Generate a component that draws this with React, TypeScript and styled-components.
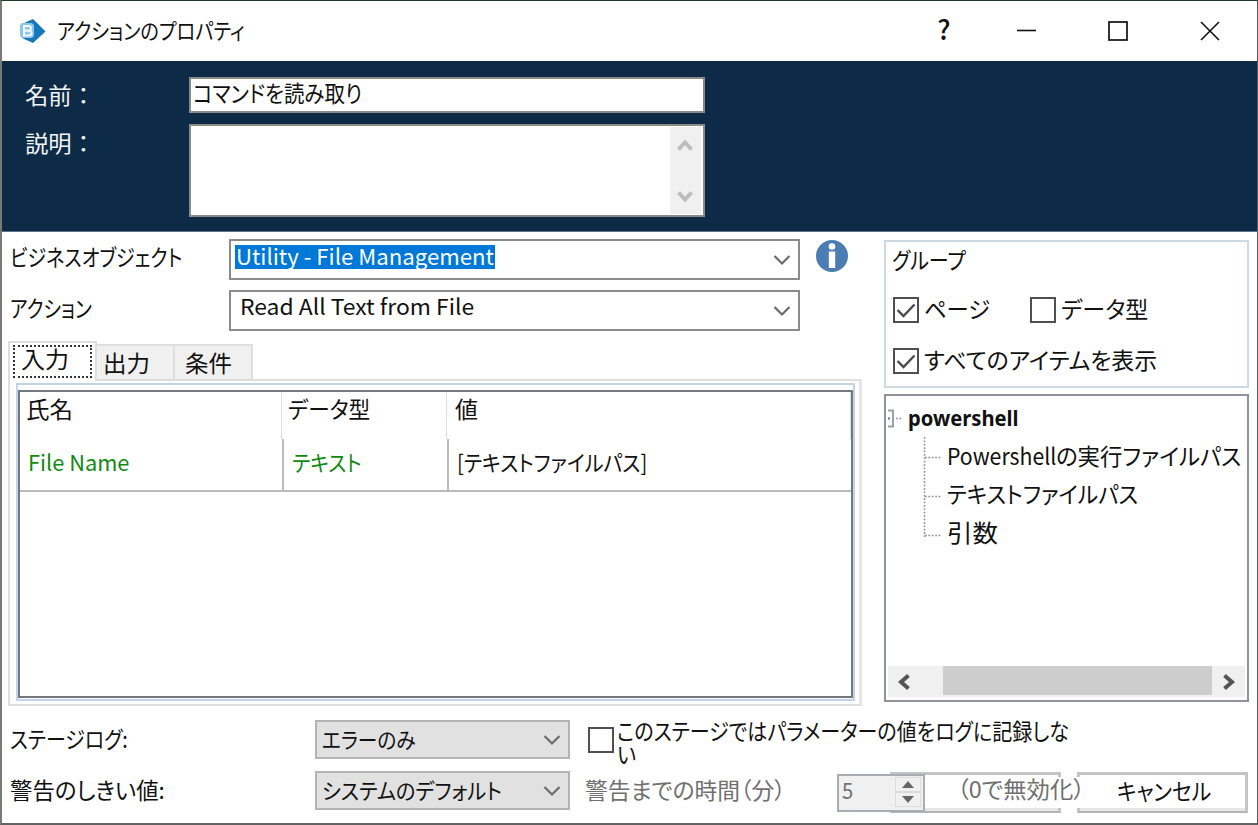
import React, { useLayoutEffect, useRef, useState } from 'react';
import styled, { createGlobalStyle, css } from 'styled-components';

const GlobalStyle = createGlobalStyle`
  * { box-sizing: border-box; }
  body {
    margin: 0;
    overflow: hidden;
    background: #fff;
    color: #111;
    font-family: 'Noto Sans CJK JP', 'Noto Sans', sans-serif;
    font-feature-settings: 'palt';
  }
  svg { display: block; flex: none; }
`;

/* Text condensed or widened to an exact width */
const FitBox = styled.span<{ $w: number; $size: number; $line: number; $color?: string }>`
  display: block;
  flex: none;
  width: ${(p) => p.$w}px;
  height: ${(p) => p.$line}px;
  line-height: ${(p) => p.$line}px;
  font-size: ${(p) => p.$size}px;
  color: ${(p) => p.$color ?? 'inherit'};
  white-space: nowrap;
`;
const FitInner = styled.span`
  display: inline-block;
  vertical-align: top;
  transform-origin: 0 50%;
`;

type FitProps = { w: number; size?: number; line?: number; color?: string; children: React.ReactNode };

function Fit({ w, size = 22, line = 30, color, children }: FitProps) {
  const ref = useRef<HTMLSpanElement>(null);
  const [scale, setScale] = useState(1);
  useLayoutEffect(() => {
    if (ref.current) setScale(w / ref.current.offsetWidth);
  }, [w]);
  return (
    <FitBox $w={w} $size={size} $line={line} $color={color}>
      <FitInner ref={ref} style={{ transform: `translateY(-2px) scaleX(${scale})` }}>{children}</FitInner>
    </FitBox>
  );
}

const Window = styled.div`
  width: 1258px;
  height: 825px;
  border-style: solid;
  border-width: 1px 1px 2px 2px;
  border-color: #1c3a2b #57585a #626262 #7b7876;
  background: #fff;
  overflow: hidden;
`;

const TitleBar = styled.header`
  display: flex;
  align-items: center;
  height: 60px;
  padding-left: 18px;
`;
const TitleText = styled.div`
  margin-left: 11px;
  flex: 1;
`;
const WindowButtons = styled.div`
  display: flex;
  align-items: center;
  height: 60px;
`;
const WindowButton = styled.div<{ $w: number }>`
  display: flex;
  align-items: center;
  justify-content: center;
  width: ${(p) => p.$w}px;
  height: 60px;
`;
const HelpMark = styled.span`
  font: 500 27px/30px 'Noto Sans CJK JP', sans-serif;
  padding-bottom: 4px;
`;

const Banner = styled.section`
  display: grid;
  grid-template-columns: 164px 516px;
  grid-template-rows: 36px 93px;
  row-gap: 11px;
  height: 171px;
  padding: 16px 0 0 23px;
  background: #0d2a47;
  border-bottom: 1px solid #5f7388;
  color: #f2f4f6;
`;
const BannerLabel = styled.div<{ $top: number }>`
  padding-top: ${(p) => p.$top}px;
  font-feature-settings: normal;
`;
const TextField = styled.div`
  display: flex;
  padding-left: 2px;
  border: 2px solid #8a8a88;
  background: #fff;
  color: #111;
`;
const MultiField = styled(TextField)`
  justify-content: flex-end;
  padding: 1px 2px 1px 0;
`;
const VerticalScroll = styled.div`
  display: flex;
  flex-direction: column;
  justify-content: space-between;
  align-items: center;
  width: 31px;
  padding: 11px 2px 10px 0;
  background: #f0f0f0;
`;

const Main = styled.main`
  display: flex;
  height: 478px;
`;
const Left = styled.div`
  width: 882px;
  padding: 7px 0 0 6px;
`;
const FieldRow = styled.div`
  display: flex;
  height: 40px;
  margin-bottom: 11px;
`;
const FieldLabel = styled.div`
  width: 221px;
  padding: 4px 0 0 2px;
`;
const Combo = styled.div<{ $w: number; $h: number; $muted?: boolean }>`
  display: flex;
  flex: none;
  justify-content: space-between;
  width: ${(p) => p.$w}px;
  height: ${(p) => p.$h}px;
  border: 2px solid ${(p) => (p.$muted ? '#b4b4b4' : '#8b8b8b')};
  background: ${(p) => (p.$muted ? '#e1e1e1' : '#fff')};
  padding: 0 7px 0 4px;
  svg { align-self: center; }
`;
const Selection = styled.div`
  height: 24px;
  margin-top: 4px;
  padding: 0 1px;
  background: #0078d7;
  color: #fff;
`;
const PlainValue = styled.div<{ $left: number; $top?: number }>`
  padding: ${(p) => p.$top ?? 0}px 0 0 ${(p) => p.$left}px;
`;
const InfoIcon = styled.div`
  margin: 1px 0 0 16px;
`;

const Tabs = styled.div`
  display: flex;
  align-items: flex-end;
  height: 40px;
  margin-bottom: -2px;
  position: relative;
`;
const Tab = styled.div<{ $active?: boolean; $w: number; $pad?: number }>`
  width: ${(p) => p.$w}px;
  height: 37px;
  padding: 3px 0 0 ${(p) => p.$pad ?? 8}px;
  border: 2px solid #dedede;
  border-left-width: 0;
  border-bottom-color: #dcdcdc;
  background: #f0f0f0;
  ${(p) =>
    p.$active &&
    css`
      height: 40px;
      padding: 2px 3px 0;
      border-left-width: 2px;
      border-bottom: 0;
      background: #fff;
    `}
`;
const FocusRect = styled.div`
  display: flex;
  height: 33px;
  padding-left: 6px;
  border: 2px dotted #333;
`;
const TabPanel = styled.div`
  width: 854px;
  height: 327px;
  padding: 2px 4px 4px 6px;
  border: 2px solid #dfdfdf;
  border-right: 3px solid #e6e6e6;
`;
const GridFrame = styled.div`
  height: 318px;
  width: 839px;
  padding-top: 5px;
  border: 2px solid #c2d4ea;
`;
const DataGrid = styled.div`
  height: 308px;
  border: 2px solid #74777b;
`;
const GridHead = styled.div`
  display: grid;
  grid-template-columns: 262px 165px 1fr;
  height: 47px;
`;
const HeadCell = styled.div`
  padding: 3px 0 0 6px;
  border-right: 1px solid #dedede;
  &:last-child { padding-left: 8px; }
`;
const GridRow = styled.div`
  display: grid;
  grid-template-columns: 264px 165px 1fr;
  height: 53px;
  border-bottom: 2px solid #bababa;
`;
const RowCell = styled.div`
  padding: 9px 0 0 8px;
  border-right: 2px solid #bdbdbd;
  &:last-child { border-right: 0; }
`;

const Right = styled.aside`
  width: 365px;
  padding-top: 8px;
`;
const GroupBox = styled.div`
  height: 148px;
  padding: 4px 0 0 6px;
  border: 2px solid #ccdae6;
`;
const CheckRow = styled.div<{ $top: number }>`
  display: flex;
  align-items: center;
  height: 30px;
  margin: ${(p) => p.$top}px 0 0 1px;
`;
const CheckItem = styled.div<{ $w: number }>`
  display: flex;
  align-items: center;
  gap: 5px;
  width: ${(p) => p.$w}px;
`;
const CheckBox = styled.div`
  display: flex;
  align-items: center;
  justify-content: center;
  flex: none;
  width: 26px;
  height: 26px;
  border: 2px solid #505050;
  background: #fff;
`;

const TreeBox = styled.div`
  display: flex;
  flex-direction: column;
  justify-content: space-between;
  height: 308px;
  margin-top: 6px;
  padding: 3px 2px;
  border: 2px solid #8d929b;
`;
const TreeBody = styled.div`
  display: flex;
  height: 200px;
`;
const TreeLabels = styled.div`
  margin-left: -35px;
`;
const TreeItem = styled.div<{ $root?: boolean }>`
  display: flex;
  height: 38.5px;
  align-items: center;
  padding-top: ${(p) => (p.$root ? 2 : 0)}px;
  margin-left: ${(p) => (p.$root ? 0 : 39)}px;
  font-weight: ${(p) => (p.$root ? 700 : 400)};
  font-family: ${(p) => (p.$root ? "'Noto Sans', sans-serif" : 'inherit')};
`;
const HorizontalScroll = styled.div`
  display: flex;
  align-items: center;
  justify-content: space-between;
  height: 31px;
  padding: 0 9px;
  background: #f0f0f0;
`;
const Thumb = styled.div`
  width: 269px;
  height: 29px;
  margin: 0 10px 2px 31px;
  background: #cdcdcd;
`;

const Footer = styled.footer`
  padding: 10px 0 0 8px;
`;
const FooterRow = styled.div`
  display: flex;
  height: 51px;
`;
const FooterLabel = styled.div`
  width: 305px;
  padding-top: 5px;
`;
const LogOption = styled.div`
  display: flex;
  margin-left: 18px;
  gap: 3px;
  ${CheckBox} { margin-top: 7px; }
`;
const LogText = styled.div`
  margin-top: 1px;
`;
const WarnLabel = styled.div`
  width: 267px;
  padding: 5px 0 0 15px;
`;
const Actions = styled.div`
  position: relative;
  display: flex;
  gap: 16px;
  width: 412px;
  height: 42px;
  padding: 1px 0 0 53px;
`;
const DialogButton = styled.div`
  display: flex;
  width: 171px;
  height: 41px;
  padding: 2px 0 0 37px;
  border: 3px solid #c4c4c4;
  border-bottom: 2px solid #b4b4b4;
  box-shadow: inset 0 -3px 0 #e6e6e6;
`;
const Spinner = styled.div`
  position: absolute;
  left: 0;
  top: 3px;
  display: flex;
  justify-content: space-between;
  width: 88px;
  height: 38px;
  padding: 0 0 0 3px;
  border: 2px solid #a9acb4;
  background: #f0f0f0;
`;
const SpinnerArrows = styled.div`
  display: flex;
  flex-direction: column;
  width: 28px;
  padding: 1px 2px 3px 0;
`;
const SpinnerArrow = styled.div`
  display: flex;
  flex: 1;
  align-items: center;
  justify-content: center;
  border: 1px solid #dcdcdc;
`;
const DisableHint = styled.div`
  position: absolute;
  left: 119px;
  top: 6px;
  display: flex;
  width: 137px;
  height: 31px;
  padding-left: 1px;
  background: #fff;
`;

const ChevronDown = ({ color = '#6b6b6b' }) => (
  <svg width="18" height="12" viewBox="0 0 18 12" fill="none" stroke={color} strokeWidth="2.2">
    <path d="M1.5 2 9 9.5 16.5 2" />
  </svg>
);
const ScrollChevron = ({ up = false }) => (
  <svg width="16" height="14" viewBox="0 0 16 14" fill="none" stroke="#bdbdbd" strokeWidth="4">
    <path d={up ? 'M1.5 11.5 8 4.5 14.5 11.5' : 'M1.5 2.5 8 9.5 14.5 2.5'} />
  </svg>
);
const SideChevron = ({ right = false }) => (
  <svg width="14" height="16" viewBox="0 0 14 16" fill="none" stroke="#555" strokeWidth="4">
    <path d={right ? 'M2.5 1.5 10 8 2.5 14.5' : 'M11.5 1.5 4 8 11.5 14.5'} />
  </svg>
);
const CheckMark = () => (
  <svg width="22" height="22" viewBox="0 0 22 22" fill="none" stroke="#4a4a4a" strokeWidth="2.4">
    <path d="M2.5 11 8.5 17 19.5 5.5" />
  </svg>
);
const AppLogo = () => (
  <svg width="26" height="25" viewBox="0 0 26 25">
    <path d="M13 0 25.500 12.500 13 24 2 19V5Z" fill="#1478bd" />
    <path d="M0 6 2 4H12L14 6V17L12 19H2L0 17Z" fill="#8cc6e8" />
    <path d="M4 7H8.500Q11 7 11 9.200 11 11 9.500 11.600 11.500 12.300 11.500 14 11.500 16.500 8.500 16.500H4Z" fill="none" stroke="#f4fafe" strokeWidth="2" />
    <path d="M5 11.700H9.500" stroke="#f4fafe" strokeWidth="2" />
  </svg>
);
const TreeLines = () => (
  <svg width="55" height="200" viewBox="0 0 55 200" fill="none">
    <path d="M0 11.500H5V27.500H0" stroke="#a0a0a0" strokeWidth="2" />
    <path d="M0 19.500H2" stroke="#4a6cc0" strokeWidth="2" />
    <path d="M8 19.500H14M37 58.500H53M37 97.500H53M37 136.500H53M36.500 38V138" stroke="#8c8c8c" strokeWidth="1.500" strokeDasharray="1.700 1.700" />
  </svg>
);

export default function App() {
  const green = '#128a12';
  const gray = '#707070';
  return (
    <>
      <GlobalStyle />
      <Window>
        <TitleBar>
          <AppLogo />
          <TitleText><Fit w={188}>アクションのプロパティ</Fit></TitleText>
          <WindowButtons>
            <WindowButton $w={76}><HelpMark>?</HelpMark></WindowButton>
            <WindowButton $w={90}>
              <svg width="20" height="20"><path d="M0 9.500H19" stroke="#111" strokeWidth="1.600" /></svg>
            </WindowButton>
            <WindowButton $w={91}>
              <svg width="20" height="20"><rect x="1" y="1" width="18" height="18" fill="none" stroke="#111" strokeWidth="1.700" /></svg>
            </WindowButton>
            <WindowButton $w={94}>
              <svg width="20" height="20"><path d="M1 1 19 19M19 1 1 19" stroke="#111" strokeWidth="1.600" /></svg>
            </WindowButton>
          </WindowButtons>
        </TitleBar>

        <Banner>
          <BannerLabel $top={4}><Fit w={70} size={23}>名前：</Fit></BannerLabel>
          <TextField><Fit w={169} size={23}>コマンドを読み取り</Fit></TextField>
          <BannerLabel $top={5}><Fit w={70} size={23}>説明：</Fit></BannerLabel>
          <MultiField>
            <VerticalScroll><ScrollChevron up /><ScrollChevron /></VerticalScroll>
          </MultiField>
        </Banner>

        <Main>
          <Left>
            <FieldRow>
              <FieldLabel><Fit w={172} size={23}>ビジネスオブジェクト</Fit></FieldLabel>
              <Combo $w={571} $h={41}>
                <Selection><Fit w={258} line={24}>Utility - File Management</Fit></Selection>
                <ChevronDown />
              </Combo>
              <InfoIcon>
                <svg width="32" height="32" viewBox="0 0 32 32">
                  <circle cx="16" cy="16" r="16" fill="#4a7db4" />
                  <circle cx="16" cy="6.500" r="3.300" fill="#fff" />
                  <path d="M12.800 11.500H19.200V28H12.800Z" fill="#fff" />
                </svg>
              </InfoIcon>
            </FieldRow>
            <FieldRow>
              <FieldLabel><Fit w={82} size={23}>アクション</Fit></FieldLabel>
              <Combo $w={571} $h={41}>
                <PlainValue $left={5}><Fit w={234}>Read All Text from File</Fit></PlainValue>
                <ChevronDown />
              </Combo>
            </FieldRow>
            <Tabs>
              <Tab $active $w={89}><FocusRect><Fit w={48} size={23} line={27}>入力</Fit></FocusRect></Tab>
              <Tab $w={78} $pad={6}><Fit w={47} size={23}>出力</Fit></Tab>
              <Tab $w={78} $pad={10}><Fit w={47} size={23}>条件</Fit></Tab>
            </Tabs>
            <TabPanel>
              <GridFrame>
                <DataGrid>
                  <GridHead>
                    <HeadCell><Fit w={47} size={23}>氏名</Fit></HeadCell>
                    <HeadCell><Fit w={82} size={23}>データ型</Fit></HeadCell>
                    <HeadCell><Fit w={23} size={23}>値</Fit></HeadCell>
                  </GridHead>
                  <GridRow>
                    <RowCell><Fit w={101} color={green}>File Name</Fit></RowCell>
                    <RowCell><Fit w={70} color={green}>テキスト</Fit></RowCell>
                    <RowCell><Fit w={190}>[テキストファイルパス]</Fit></RowCell>
                  </GridRow>
                </DataGrid>
              </GridFrame>
            </TabPanel>
          </Left>

          <Right>
            <GroupBox>
              <Fit w={74} size={23}>グループ</Fit>
              <CheckRow $top={19}>
                <CheckItem $w={137}><CheckBox><CheckMark /></CheckBox><Fit w={66} size={23}>ページ</Fit></CheckItem>
                <CheckItem $w={130}><CheckBox /><Fit w={87} size={23}>データ型</Fit></CheckItem>
              </CheckRow>
              <CheckRow $top={21}>
                <CheckItem $w={290}><CheckBox><CheckMark /></CheckBox><Fit w={233} size={23}>すべてのアイテムを表示</Fit></CheckItem>
              </CheckRow>
            </GroupBox>
            <TreeBox>
              <TreeBody>
                <TreeLines />
                <TreeLabels>
                  <TreeItem $root><Fit w={111}>powershell</Fit></TreeItem>
                  <TreeItem><Fit w={109} size={23}>Powershell</Fit><Fit w={185} size={23}>の実行ファイルパス</Fit></TreeItem>
                  <TreeItem><Fit w={191} size={23}>テキストファイルパス</Fit></TreeItem>
                  <TreeItem><Fit w={51} size={24}>引数</Fit></TreeItem>
                </TreeLabels>
              </TreeBody>
              <HorizontalScroll><SideChevron /><Thumb /><SideChevron right /></HorizontalScroll>
            </TreeBox>
          </Right>
        </Main>

        <Footer>
          <FooterRow>
            <FooterLabel><Fit w={118} size={23}>ステージログ:</Fit></FooterLabel>
            <Combo $w={255} $h={39} $muted>
              <PlainValue $left={1} $top={3}><Fit w={94}>エラーのみ</Fit></PlainValue>
              <ChevronDown />
            </Combo>
            <LogOption>
              <CheckBox />
              <LogText>
                <Fit w={452} size={23} line={23}>このステージではパラメーターの値をログに記録しな<br />い</Fit>
              </LogText>
            </LogOption>
          </FooterRow>
          <FooterRow>
            <FooterLabel><Fit w={155} size={23}>警告のしきい値:</Fit></FooterLabel>
            <Combo $w={255} $h={39} $muted>
              <PlainValue $left={1} $top={3}><Fit w={180}>システムのデフォルト</Fit></PlainValue>
              <ChevronDown />
            </Combo>
            <WarnLabel><Fit w={201} size={23} color={gray}>警告までの時間（分）</Fit></WarnLabel>
            <Actions>
              <DialogButton />
              <DialogButton><Fit w={94} size={23}>キャンセル</Fit></DialogButton>
              <Spinner>
                <Fit w={11} color={gray}>5</Fit>
                <SpinnerArrows>
                  <SpinnerArrow><svg width="12" height="7"><path d="M0 7 6 0 12 7Z" fill="#666" /></svg></SpinnerArrow>
                  <SpinnerArrow><svg width="12" height="7"><path d="M0 0 6 7 12 0Z" fill="#666" /></svg></SpinnerArrow>
                </SpinnerArrows>
              </Spinner>
              <DisableHint><Fit w={128} size={23} line={27} color={gray}>（0で無効化）</Fit></DisableHint>
            </Actions>
          </FooterRow>
        </Footer>
      </Window>
    </>
  );
}
